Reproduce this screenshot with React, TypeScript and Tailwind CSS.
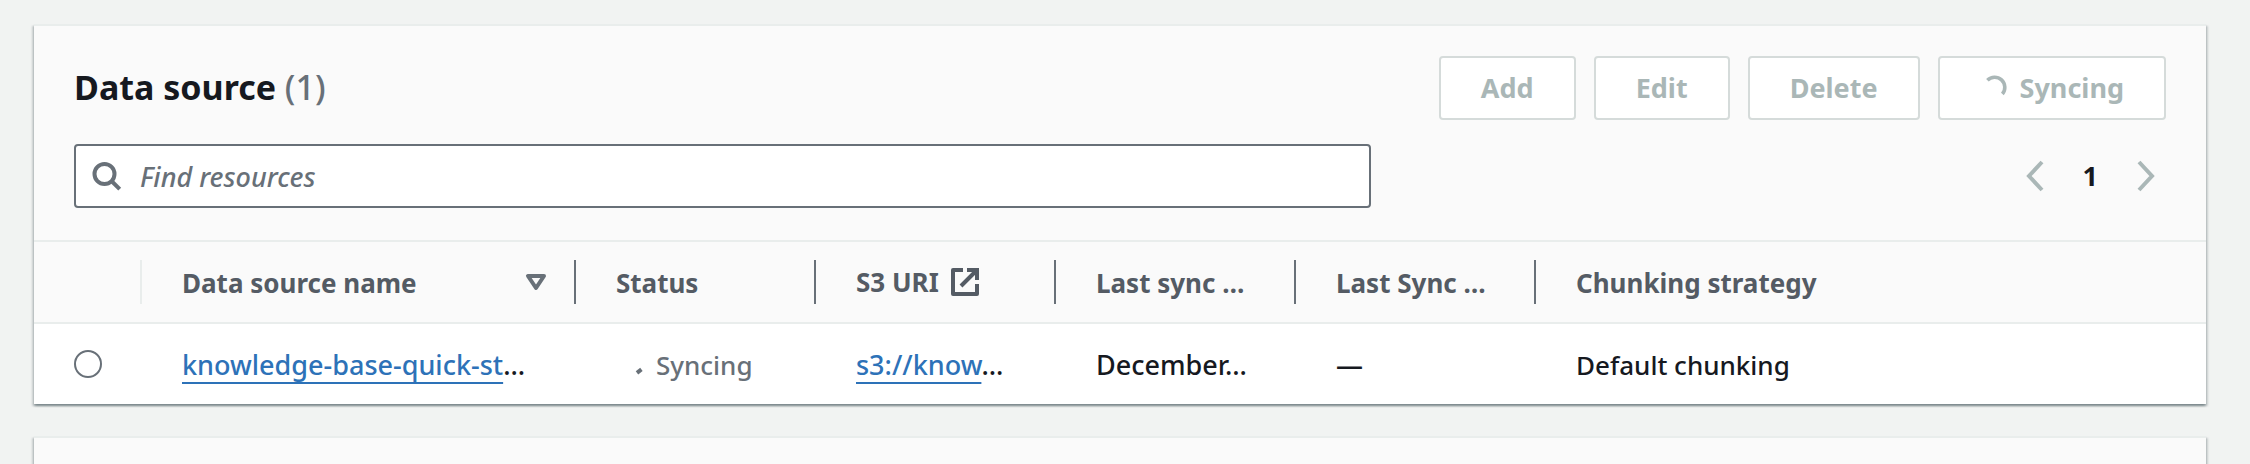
import React from "react";

const card =
  "border-t-2 border-[#e9edec] bg-[#fafafa] shadow-[0_2px_2px_0_rgba(0,28,36,0.3),2px_2px_2px_0_rgba(0,28,36,0.15),-2px_2px_2px_0_rgba(0,28,36,0.15)]";

function ActionButton({ children }: { children: React.ReactNode }) {
  return (
    <button
      type="button"
      disabled
      className="flex h-16 items-center gap-2 rounded border-2 border-[#d5dbda] bg-white px-10 text-[27px] font-bold text-[#aab7b7]"
    >
      {children}
    </button>
  );
}

function Chevron({ d, label }: { d: string; label: string }) {
  return (
    <button type="button" disabled aria-label={label} className="text-[#aab7b7]">
      <svg className="size-8" viewBox="0 0 32 32" fill="none" stroke="currentColor" strokeWidth="4">
        <path d={d} />
      </svg>
    </button>
  );
}

function HeaderCell({
  children,
  label,
  divider = "border-[#687078]",
}: {
  children?: React.ReactNode;
  label?: string;
  divider?: string;
}) {
  return (
    <th scope="col" aria-label={label} className="border-y-2 border-[#e9edec] px-0 py-[18px] text-[26px] font-bold">
      <div className={`flex h-11 items-center border-r-2 pr-[22px] pl-10 ${divider}`}>{children}</div>
    </th>
  );
}

function TableLink({ children }: { children: React.ReactNode }) {
  return (
    <>
      <a
        href="#"
        className="text-[#2d72b8] underline decoration-2 underline-offset-7 [text-decoration-skip-ink:none]"
      >
        {children}
      </a>
      …
    </>
  );
}

export default function App() {
  return (
    <main className="h-screen overflow-hidden bg-[#f1f3f2] pt-6 pr-11 pl-[34px] font-['Noto_Sans',sans-serif] text-[27px] leading-10 text-[#16191f]">
      <section className={card}>
        <div className="flex flex-col gap-6 px-10 pt-[30px] pb-8">
          <div className="flex items-center justify-between">
            <h2 className="pb-[2px] text-[34px] leading-[44px] font-bold">
              Data source <span className="font-medium text-[#687078]">(1)</span>
            </h2>
            <div className="flex gap-[18px]">
              <ActionButton>Add</ActionButton>
              <ActionButton>Edit</ActionButton>
              <ActionButton>Delete</ActionButton>
              <ActionButton>
                <svg className="size-8" viewBox="0 0 32 32" fill="none" stroke="currentColor" strokeWidth="3.6">
                  <path d="M7.4 8.2A10.2 10.2 0 0 1 22.4 22" />
                </svg>
                Syncing
              </ActionButton>
            </div>
          </div>
          <div className="flex items-center justify-between">
            <div className="flex h-16 w-[62%] items-center gap-4 rounded border-2 border-[#687078] bg-white px-4 text-[#687078]">
              <svg className="size-8 shrink-0" viewBox="0 0 32 32" fill="none" stroke="currentColor" strokeWidth="4">
                <circle cx="12.5" cy="14" r="10" />
                <path d="M19.5 21l8.2 8.2" />
              </svg>
              <input
                type="search"
                aria-label="Find resources"
                placeholder="Find resources"
                className="h-11 min-w-0 flex-1 bg-transparent font-medium outline-none placeholder:text-[#687078] placeholder:italic"
              />
            </div>
            <nav aria-label="Pagination" className="flex items-center gap-8 pr-1">
              <Chevron label="Previous page" d="M23 2L10 16l13 14" />
              <button type="button" aria-current="page" className="font-bold">
                1
              </button>
              <Chevron label="Next page" d="M9 2l13 14L9 30" />
            </nav>
          </div>
        </div>
        <table className="w-full table-fixed border-separate border-spacing-0 text-left whitespace-nowrap">
          <colgroup>
            <col className="w-[108px]" />
            <col className="w-[434px]" />
            <col className="w-[240px]" />
            <col className="w-[240px]" />
            <col className="w-[240px]" />
            <col className="w-[240px]" />
            <col />
          </colgroup>
          <thead className="text-[#545b64]">
            <tr>
              <HeaderCell label="Selection" divider="border-[#e9edec]" />
              <HeaderCell>
                <span className="flex-1 pt-[2px]">Data source name</span>
                <svg className="size-8 text-[#687078]" viewBox="0 0 32 32" fill="none" stroke="currentColor" strokeWidth="4" strokeLinejoin="round">
                  <path d="M8 10h16l-8 12z" />
                </svg>
              </HeaderCell>
              <HeaderCell>
                <span className="pt-[2px]">Status</span>
              </HeaderCell>
              <HeaderCell>
                <span className="flex items-center gap-2">
                  S3 URI
                  <svg className="size-8" viewBox="0 0 32 32" fill="none" stroke="currentColor" strokeWidth="4">
                    <path d="M16 4H6v24h24V18" strokeLinejoin="round" />
                    <path d="M20 4h10v10M30 4L14 20" />
                  </svg>
                </span>
              </HeaderCell>
              <HeaderCell>
                <span className="pt-[2px]">Last sync …</span>
              </HeaderCell>
              <HeaderCell>
                <span className="pt-[2px]">Last Sync …</span>
              </HeaderCell>
              <HeaderCell divider="border-transparent">
                <span className="pt-[2px]">Chunking strategy</span>
              </HeaderCell>
            </tr>
          </thead>
          <tbody className="bg-white font-medium">
            <tr>
              <td className="h-20 pl-10">
                <input
                  type="radio"
                  name="source"
                  aria-label="Select data source"
                  className="block size-7 appearance-none rounded-full border-2 border-[#687078] bg-white checked:border-8"
                />
              </td>
              <td className="pt-[2px] pl-10">
                <TableLink>knowledge-base-quick-st</TableLink>
              </td>
              <td className="pt-[2px] pl-10 text-[26px] text-[#687078]">
                <span className="flex items-center gap-2">
                  <svg className="size-8" viewBox="0 0 32 32" fill="none" stroke="currentColor" strokeWidth="4">
                    <path d="M21 23.8l4.4-3.4" />
                  </svg>
                  Syncing
                </span>
              </td>
              <td className="pt-[2px] pl-10">
                <TableLink>s3://know</TableLink>
              </td>
              <td className="pt-[2px] pl-10">December…</td>
              <td className="pt-[2px] pl-10">—</td>
              <td className="pt-[2px] pl-10 text-[26px]">Default chunking</td>
            </tr>
          </tbody>
        </table>
      </section>
      <section className={`mt-8 h-20 ${card}`} />
    </main>
  );
}
